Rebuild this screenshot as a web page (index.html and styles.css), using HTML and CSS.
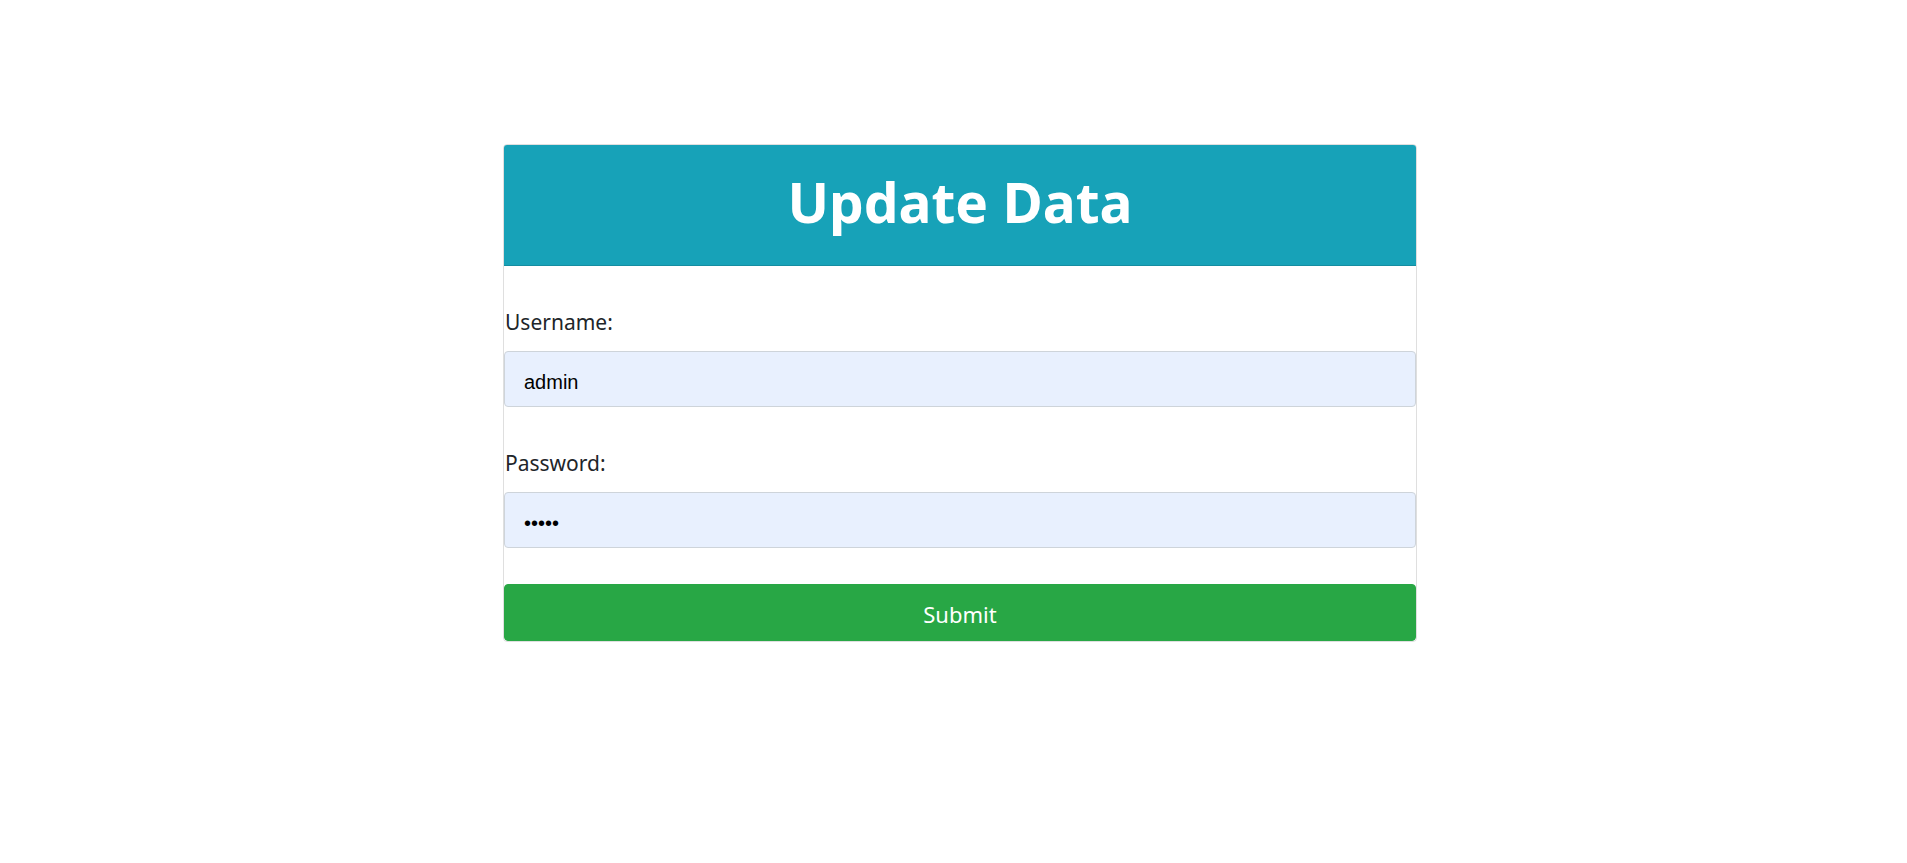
FILE: index.html
```html
<!DOCTYPE html>
<html lang="en">
<head>
<meta charset="utf-8">
<title>Update Data</title>
<link rel="stylesheet" href="styles.css">
</head>
<body>
<div class="page">
  <form class="card">
    <div class="card-header">
      <h1 class="title">Update Data</h1>
    </div>
    <div class="card-body">
      <div class="field">
        <label class="label" for="username">Username:</label>
        <input class="input" id="username" type="text" value="admin">
      </div>
      <div class="field">
        <label class="label" for="password">Password:</label>
        <input class="input" id="password" type="password" value="admin">
      </div>
      <button class="submit" type="button">Submit</button>
    </div>
  </form>
</div>
</body>
</html>
```

FILE: styles.css
```css
html, body {
  margin: 0;
  padding: 0;
  background: #ffffff;
}

body {
  font-family: "Noto Sans", "Open Sans", sans-serif;
  color: #212529;
}

.page {
  display: flex;
  justify-content: center;
  padding: 144px 0 0 13px;
}

.card {
  width: 914px;
  box-sizing: border-box;
  border: 1px solid rgba(0, 0, 0, 0.125);
  border-radius: 4px;
  display: flex;
  flex-direction: column;
  overflow: hidden;
  margin: 0;
}

.card-header {
  background: #17a2b8;
  border-bottom: 1px solid rgba(0, 0, 0, 0.125);
  height: 121px;
  box-sizing: border-box;
  display: flex;
  align-items: center;
  justify-content: center;
}

.title {
  margin: 0;
  color: #ffffff;
  font-size: 55px;
  font-weight: 700;
  line-height: 1;
  padding-bottom: 8px;
}

.card-body {
  display: flex;
  flex-direction: column;
  padding-top: 41px;
}

.field {
  display: flex;
  flex-direction: column;
}

.field + .field {
  margin-top: 41px;
}

.label {
  font-size: 21px;
  line-height: 30px;
  margin-bottom: 14px;
  padding-left: 1px;
}

.input {
  box-sizing: border-box;
  width: 100%;
  height: 56px;
  margin: 0;
  padding: 6px 19px 0;
  border: 1px solid #ced4da;
  border-radius: 4px;
  background: #e8f0fe;
  color: #000000;
  font-family: "Liberation Sans", Arial, sans-serif;
  font-size: 20px;
  outline: none;
}

.submit {
  margin-top: 36px;
  height: 57px;
  border: 1px solid #28a745;
  border-radius: 4px;
  background: #28a745;
  color: #ffffff;
  font-family: "Noto Sans", "Open Sans", sans-serif;
  font-size: 22px;
  padding: 2px 0 0;
  cursor: pointer;
}
```
